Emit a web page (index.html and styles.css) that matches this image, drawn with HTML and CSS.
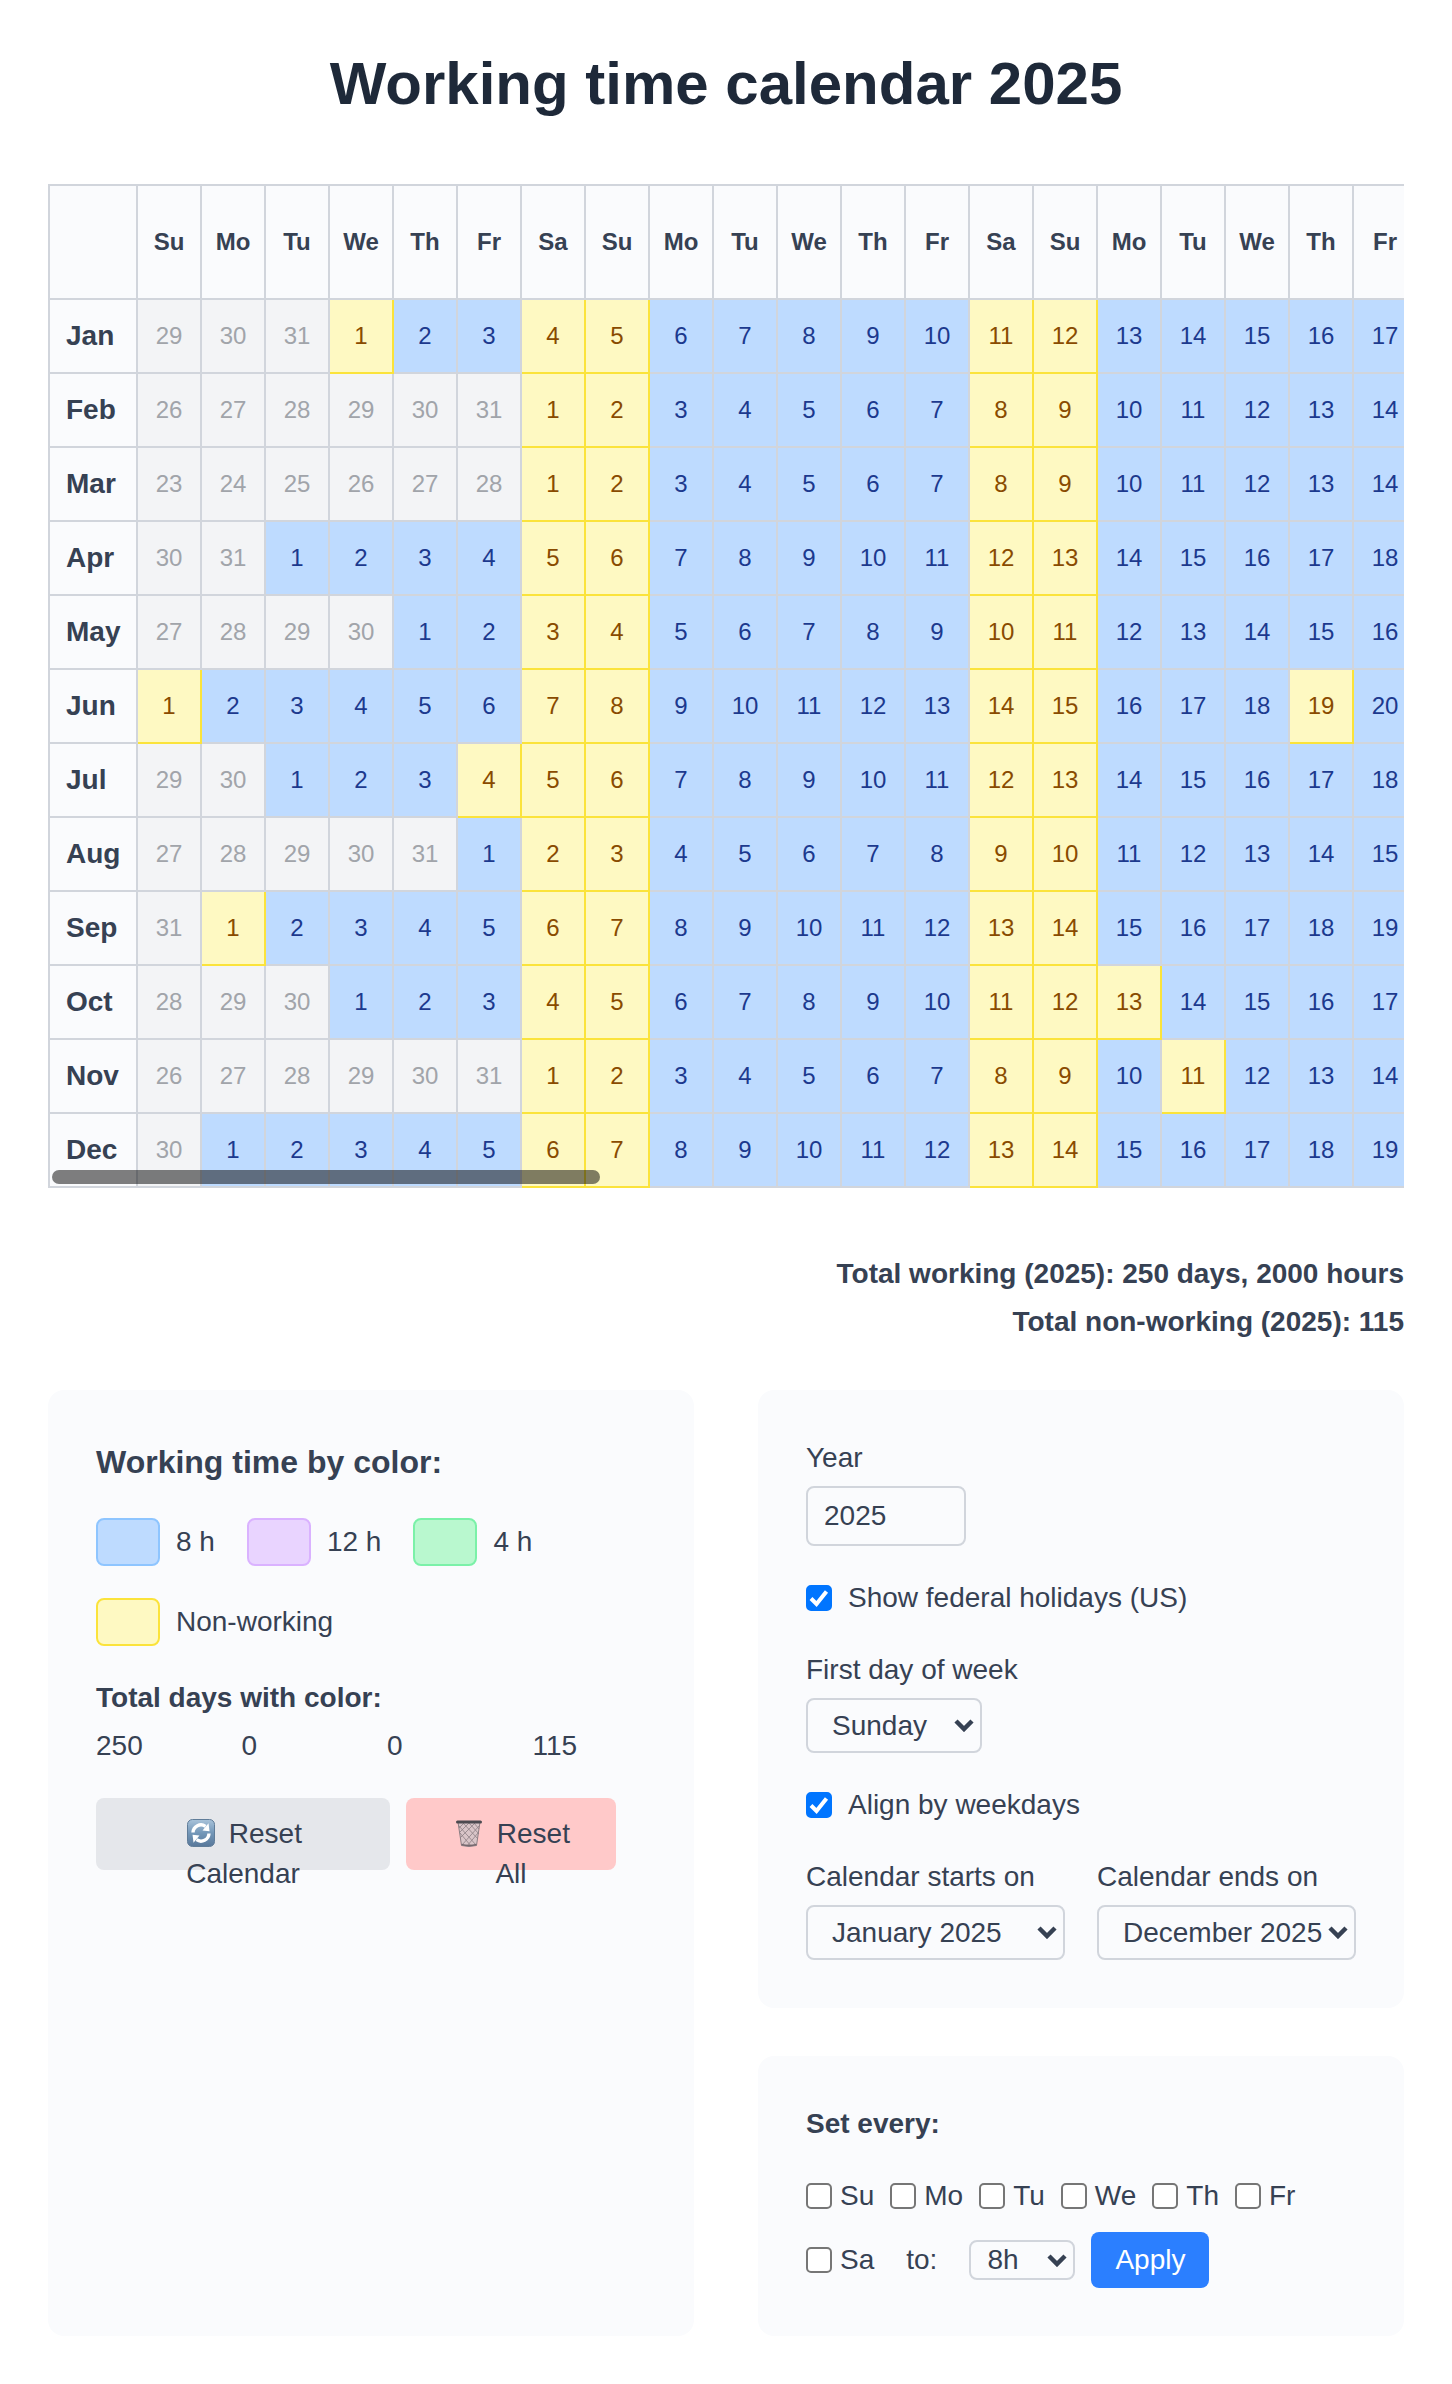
FILE: index.html
```html
<!DOCTYPE html>
<html lang="en">

<head>
    <meta charset="UTF-8">
    <meta name="viewport" content="width=device-width, initial-scale=1.0">
    <title>Working time calendar 2025</title>
    <link rel="stylesheet" href="styles.css">
</head>

<body>
    <h1>Working time calendar 2025</h1>

    <div class="calendar">
        <div class="scroll">
            <table>
                <thead>
                    <tr id="weekdays"></tr>
                </thead>
                <tbody id="months"></tbody>
            </table>
        </div>
        <div class="thumb"></div>
    </div>

    <div class="totals">
        <div>Total working (2025): 250 days, 2000 hours</div>
        <div>Total non-working (2025): 115</div>
    </div>

    <div class="panels">
        <section class="panel colors">
            <h2>Working time by color:</h2>
            <div class="legend">
                <div class="item"><span class="swatch blue"></span>8 h</div>
                <div class="item"><span class="swatch purple"></span>12 h</div>
                <div class="item"><span class="swatch green"></span>4 h</div>
                <div class="item"><span class="swatch yellow"></span>Non-working</div>
            </div>
            <h3>Total days with color:</h3>
            <div class="counts">
                <span>250</span>
                <span>0</span>
                <span>0</span>
                <span>115</span>
            </div>
            <div class="buttons">
                <button class="reset" type="button">
                    <svg class="icon" viewBox="0 0 28 28" aria-hidden="true">
                        <defs>
                            <linearGradient id="tile" x1="0" y1="0" x2="0" y2="1">
                                <stop offset="0" stop-color="#a9c3da" />
                                <stop offset="0.5" stop-color="#7397b8" />
                                <stop offset="1" stop-color="#58789a" />
                            </linearGradient>
                        </defs>
                        <rect x="0.5" y="0.5" width="27" height="27" rx="5" fill="url(#tile)" stroke="#607d99" />
                        <path d="M6 13.5a8 8 0 0 1 12.5-6.2" fill="none" stroke="#fff" stroke-width="3.4" />
                        <path d="M15.5 11.5l7 .8-1-8z" fill="#fff" />
                        <path d="M22 14.5a8 8 0 0 1-12.5 6.2" fill="none" stroke="#fff" stroke-width="3.4" />
                        <path d="M12.5 16.5l-7-.8 1 8z" fill="#fff" />
                    </svg>
                    Reset<br>Calendar
                </button>
                <button class="reset danger" type="button">
                    <svg class="icon" viewBox="0 0 28 28" aria-hidden="true">
                        <path d="M3 3l3.5 23.5q7.500 2 15 0L25 3z" fill="#d9c5c8" stroke="#8d7f84" />
                        <path d="M4 7l17 19M5 14l11 13M8 4l15 16M14 4l10 11M19 4l5 6M24 7L7 26M23 14L12 27M20 4L5 19M14 4L4 14M9 4L4 9" fill="none" stroke="#8d7f84" stroke-width="0.8" />
                        <path d="M6.500 25.500q7.500 2 15 0" fill="none" stroke="#75696e" stroke-width="1.500" />
                        <rect x="1" y="1.500" width="26" height="3" rx="1.500" fill="#4c4a50" />
                    </svg>
                    Reset<br>All
                </button>
            </div>
        </section>

        <section class="panel settings">
            <div class="field">
                <label for="year">Year</label>
                <input class="year" id="year" type="text" value="2025">
            </div>
            <label class="check"><input type="checkbox" checked>Show federal holidays (US)</label>
            <div class="field">
                <label for="firstday">First day of week</label>
                <select class="day" id="firstday">
                    <option>Sunday</option>
                    <option>Monday</option>
                </select>
            </div>
            <label class="check"><input type="checkbox" checked>Align by weekdays</label>
            <div class="range">
                <div class="field">
                    <label for="start">Calendar starts on</label>
                    <select id="start">
                        <option>January 2025</option>
                    </select>
                </div>
                <div class="field">
                    <label for="end">Calendar ends on</label>
                    <select id="end">
                        <option>December 2025</option>
                    </select>
                </div>
            </div>
        </section>

        <section class="panel every">
            <h3>Set every:</h3>
            <div class="days">
                <label><input type="checkbox">Su</label>
                <label><input type="checkbox">Mo</label>
                <label><input type="checkbox">Tu</label>
                <label><input type="checkbox">We</label>
                <label><input type="checkbox">Th</label>
                <label><input type="checkbox">Fr</label>
                <label><input type="checkbox">Sa</label>
                <label class="to" for="hours">to:</label>
                <select class="hours" id="hours">
                    <option>8h</option>
                    <option>12h</option>
                    <option>4h</option>
                </select>
                <button class="apply" type="button">Apply</button>
            </div>
        </section>
    </div>

    <script src="script.js"></script>
</body>

</html>
```
FILE: styles.css
```css
* {
    box-sizing: border-box;
}

body {
    margin: 0;
    padding: 48px;
    background-color: white;
    color: #364153;
    font-family: "Liberation Sans", Arial, sans-serif;
    font-size: 28px;
    line-height: 40px;
}

h1 {
    margin: 0 0 64px;
    color: #1e2939;
    font-size: 60px;
    line-height: 72px;
    text-align: center;
}

h2,
h3 {
    margin: 0;
    font-size: 28px;
}

h2 {
    font-size: 32px;
    line-height: 48px;
}

.calendar {
    position: relative;
}

.scroll {
    overflow-x: auto;
    scrollbar-width: none;
}

table {
    border-collapse: collapse;
    table-layout: fixed;
    width: 2456px;
}

th,
td {
    width: 64px;
    height: 74px;
    padding: 0;
    border: 2px solid #d1d5dc;
    font-size: 24px;
    text-align: center;
}

th {
    background-color: #fafbfd;
}

thead th {
    height: 114px;
}

th:first-child {
    width: 88px;
    padding-left: 16px;
    font-size: 28px;
    text-align: left;
}

td.other {
    background-color: #f3f4f6;
    color: #a1a4aa;
}

td.work {
    background-color: #bedbff;
    color: #1c398e;
}

td.off {
    background-color: #fef9c2;
    border-color: #fbe33b;
    color: #894b00;
}

/* overlay scrollbar on top of the last row */
.thumb {
    position: absolute;
    left: 4px;
    bottom: 4px;
    width: 548px;
    max-width: 100%;
    height: 14px;
    border-radius: 7px;
    background-color: rgba(0, 0, 0, 0.5);
}

.totals {
    margin: 62px 0 44px;
    font-weight: bold;
    line-height: 48px;
    text-align: right;
}

.panels {
    display: grid;
    grid-template-columns: 1fr 1fr;
    gap: 48px 64px;
}

.panel {
    padding: 48px;
    border-radius: 16px;
    background-color: #fafbfd;
}

.colors {
    grid-row: span 2;
}

.legend {
    display: flex;
    flex-wrap: wrap;
    gap: 32px;
    margin: 32px 0 28px;
}

.item {
    display: flex;
    align-items: center;
    gap: 16px;
}

.swatch {
    width: 64px;
    height: 48px;
    border: 2px solid;
    border-radius: 8px;
}

.blue {
    background-color: #bedbff;
    border-color: #8ec5ff;
}

.purple {
    background-color: #e9d4ff;
    border-color: #dab2ff;
}

.green {
    background-color: #b9f8cf;
    border-color: #7bf1a8;
}

.yellow {
    background-color: #fef9c2;
    border-color: #fbe33b;
}

.colors h3,
.counts {
    line-height: 48px;
}

.counts {
    display: grid;
    grid-template-columns: repeat(4, 1fr);
    gap: 32px;
}

.buttons {
    display: flex;
    gap: 16px;
    margin-top: 28px;
}

button,
input,
select {
    margin: 0;
    color: inherit;
    font: inherit;
}

.reset {
    width: 294px;
    height: 72px;
    padding: 16px;
    border: none;
    border-radius: 8px;
    background-color: #e5e7eb;
}

.danger {
    width: 210px;
    background-color: #ffc9c9;
}

.icon {
    width: 28px;
    height: 28px;
    margin: 0 6px 0 3px;
    vertical-align: -4px;
}

.settings {
    display: flex;
    flex-direction: column;
    gap: 32px;
}

.field {
    display: flex;
    flex-direction: column;
    align-items: flex-start;
    gap: 8px;
}

.year {
    width: 160px;
    height: 60px;
    padding: 0 16px;
    border: 2px solid #d1d5dc;
    border-radius: 8px;
    background-color: transparent;
}

.check {
    display: flex;
    align-items: center;
    gap: 16px;
}

input[type="checkbox"] {
    appearance: none;
    width: 26px;
    height: 26px;
    border: 2px solid #767676;
    border-radius: 5px;
    background-color: white;
}

input[type="checkbox"]:checked {
    border-color: #0075ff;
    background: #0075ff url("data:image/svg+xml,%3Csvg xmlns='http://www.w3.org/2000/svg' viewBox='0 0 22 22'%3E%3Cpath d='M3 11.500l5.500 5.500L18.500 4.500' fill='none' stroke='white' stroke-width='4'/%3E%3C/svg%3E") center / 22px no-repeat;
}

select {
    appearance: none;
    width: 100%;
    height: 55px;
    padding: 0 0 0 24px;
    border: 2px solid #d1d5dc;
    border-radius: 8px;
    background: url("data:image/svg+xml,%3Csvg xmlns='http://www.w3.org/2000/svg' viewBox='0 0 20 13'%3E%3Cpath d='M2 2l8 8 8-8' fill='none' stroke='%23364153' stroke-width='4.500'/%3E%3C/svg%3E") right 6px center / 20px 13px no-repeat;
}

.day {
    width: 176px;
}

.range {
    display: grid;
    grid-template-columns: 1fr 1fr;
    gap: 32px;
}

.days {
    display: flex;
    flex-wrap: wrap;
    align-items: center;
    gap: 16px;
    margin-top: 32px;
}

.days label {
    display: flex;
    align-items: center;
    gap: 8px;
}

.days .to {
    margin: 0 16px;
}

.hours {
    width: 106px;
    height: 40px;
    padding-left: 16px;
    line-height: 32px;
}

.apply {
    height: 56px;
    padding: 0 24px;
    border: none;
    border-radius: 8px;
    background-color: #2b7fff;
    color: white;
}
```
FILE: script.js
```js
const year = 2025;
// 31 days plus at most 6 days of the month before
const columns = 37;
const weekdays = ['Su', 'Mo', 'Tu', 'We', 'Th', 'Fr', 'Sa'];
const months = ['Jan', 'Feb', 'Mar', 'Apr', 'May', 'Jun', 'Jul', 'Aug', 'Sep', 'Oct', 'Nov', 'Dec'];
const holidays = ['Jan 1', 'Jan 20', 'Feb 17', 'May 26', 'Jun 19', 'Jul 4', 'Sep 1', 'Oct 13', 'Nov 11', 'Nov 27', 'Dec 25'];

let head = '<th></th>';
for (let i = 0; i < columns; i++) {
    head += `<th>${weekdays[i % 7]}</th>`;
}
document.getElementById('weekdays').innerHTML = head;

function dayClass(date, month) {
    if (date.getMonth() != month) {
        return 'other';
    }
    let weekend = date.getDay() == 0 || date.getDay() == 6;
    let holiday = holidays.includes(months[month] + ' ' + date.getDate());
    return weekend || holiday ? 'off' : 'work';
}

let rows = months.map((name, month) => {
    // every row starts on the Sunday on or before the 1st
    let offset = new Date(year, month, 1).getDay();
    let cells = '';
    for (let i = 0; i < columns; i++) {
        let date = new Date(year, month, 1 - offset + i);
        cells += `<td class="${dayClass(date, month)}">${date.getDate()}</td>`;
    }
    return `<tr><th>${name}</th>${cells}</tr>`;
});
document.getElementById('months').innerHTML = rows.join('');
```
